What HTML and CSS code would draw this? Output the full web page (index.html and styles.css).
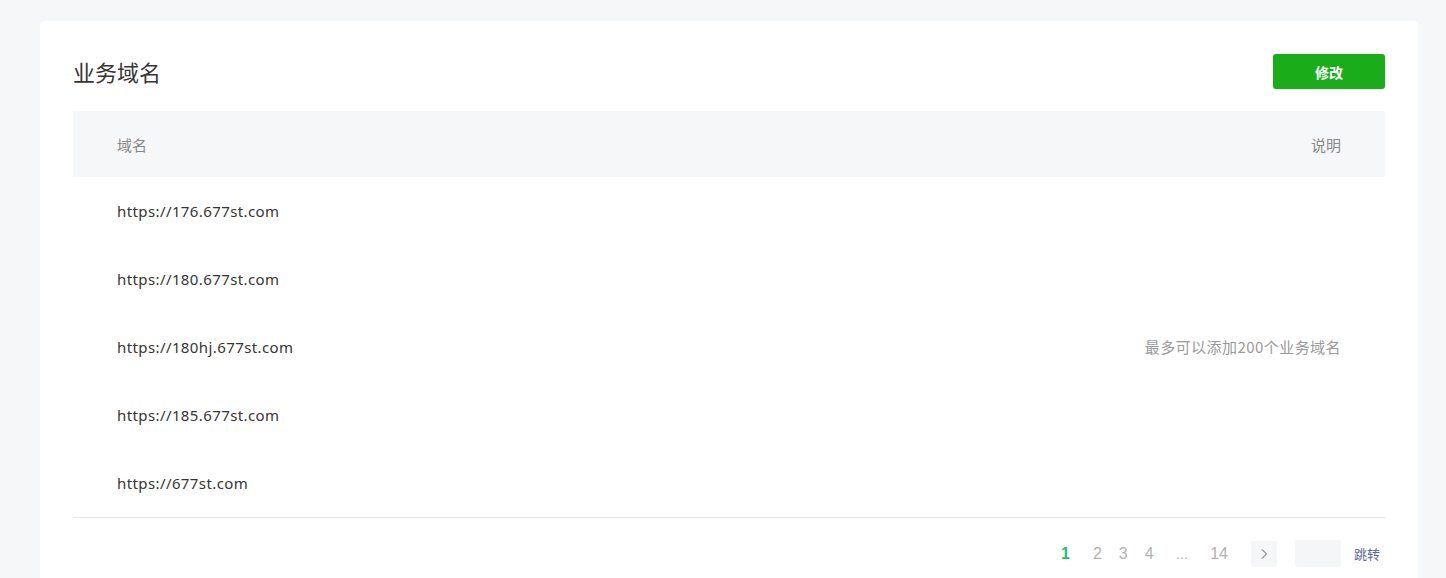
FILE: index.html
```html
<!DOCTYPE html>
<html lang="zh">
<head>
<meta charset="utf-8">
<title>业务域名</title>
<link rel="stylesheet" href="styles.css">
</head>
<body>
<div class="card">
  <div class="head">
    <h2 class="title">业务域名</h2>
    <button class="btn">修改</button>
  </div>
  <table class="tbl">
    <thead>
      <tr><th class="c1">域名</th><th class="c2">说明</th></tr>
    </thead>
    <tbody>
      <tr><td class="c1 url">https://176.677st.com</td><td class="c2 desc" rowspan="5">最多可以添加200个业务域名</td></tr>
      <tr><td class="c1 url">https://180.677st.com</td></tr>
      <tr><td class="c1 url">https://180hj.677st.com</td></tr>
      <tr><td class="c1 url">https://185.677st.com</td></tr>
      <tr><td class="c1 url">https://677st.com</td></tr>
    </tbody>
  </table>
  <div class="pager">
    <span class="pg cur">1</span>
    <span class="pg p2">2</span>
    <span class="pg p3">3</span>
    <span class="pg p4">4</span>
    <span class="pg dots">...</span>
    <span class="pg p14">14</span>
    <span class="next"><svg width="12" height="12" viewBox="0 0 12 12"><path d="M4 1.5 L8.5 6 L4 10.5" fill="none" stroke="#555" stroke-width="1"/></svg></span>
    <span class="jump-input"></span>
    <a class="jump">跳转</a>
  </div>
</div>
</body>
</html>
```
FILE: styles.css
```css
html, body { margin: 0; padding: 0; }
body {
  background: #f6f7f9;
  font-family: "Noto Sans CJK SC", "Noto Sans", sans-serif;
  color: #353535;
  padding: 21px 28px 0 40px;
}
.card {
  background: #fff;
  border-radius: 4px;
  padding: 33px 33px 0 33px;
}
.head {
  display: flex;
  justify-content: space-between;
  align-items: center;
  height: 35px;
  margin-bottom: 22px;
}
.title {
  margin: 0;
  font-size: 22px;
  font-weight: 400;
  color: #353535;
  line-height: 35px;
}
.btn {
  width: 112px;
  height: 35px;
  background: #1aad19;
  color: #fff;
  border: none;
  border-radius: 3px;
  font-family: inherit;
  font-size: 14px;
  font-weight: 700;
  padding: 0;
}
.tbl {
  width: 100%;
  border-collapse: collapse;
}
.tbl thead tr { background: #f6f7f9; height: 66px; }
.tbl th {
  font-weight: 400;
  color: #888;
  font-size: 15px;
}
.tbl .c1 { text-align: left; padding: 0 0 0 44px; }
.tbl .c2 { text-align: right; padding: 0 44px 0 0; }
.tbl tbody tr { height: 68px; }
.tbl td { font-size: 15px; color: #353535; vertical-align: middle; }
.tbl td.url {
  font-family: "Noto Sans", "Open Sans", sans-serif;
  letter-spacing: 0.4px;
}
.tbl td.desc { color: #9a9a9a; font-size: 15px; letter-spacing: 0.45px; }
.tbl tbody tr:last-child td { border-bottom: 1px solid #e5e5e5; }
.tbl tbody tr:first-child td.desc { border-bottom: 1px solid #e5e5e5; }
.pager {
  display: flex;
  justify-content: flex-end;
  align-items: center;
  height: 72px;
  padding-right: 5px;
  font-family: "Liberation Sans", Arial, sans-serif;
  font-size: 16px;
}
.pg { color: #b2b2b2; }
.pg.cur { color: #1ec16a; font-weight: 700; }
.p2 { margin-left: 23px; }
.p3 { margin-left: 17px; }
.p4 { margin-left: 17px; }
.pg.dots { margin-left: 22px; font-size: 15px; }
.p14 { margin-left: 22px; }
.next {
  width: 26px; height: 26px;
  background: #f6f7f9;
  border-radius: 2px;
  display: flex; align-items: center; justify-content: center;
  margin-left: 23px;
}
.jump-input {
  width: 46px; height: 27px;
  background: #f5f6f8;
  border-radius: 2px;
  margin-left: 18px;
}
.jump {
  color: #576b95;
  font-family: "Noto Sans CJK SC", sans-serif;
  font-size: 13px;
  margin-left: 13px;
}
```
